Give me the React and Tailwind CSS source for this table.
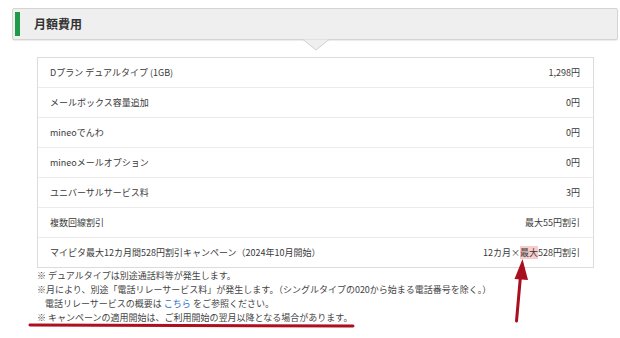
export default function App() {
  const rows = [
    ["Dプラン デュアルタイプ (1GB)", "1,298円"],
    ["メールボックス容量追加", "0円"],
    ["mineoでんわ", "0円"],
    ["mineoメールオプション", "0円"],
    ["ユニバーサルサービス料", "3円"],
    ["複数回線割引", "最大55円割引"],
  ];
  return (
    <div className="relative w-[620px] h-[338px] bg-white overflow-hidden text-[#333] [font-family:'Noto_Sans_CJK_JP','Noto_Sans',sans-serif]">
      <div className="pt-[8px] pl-[12px] pr-[2px]">
        <div className="relative flex items-center h-[32px] bg-[#efefef] border border-[#d4d4d4] rounded-[2px] shadow-[0_1px_1px_rgba(0,0,0,0.08)]">
          <div className="ml-[2px] w-[5px] h-[24px] bg-[#1e9a48]" />
          <div className="ml-[14px] text-[12px] font-bold text-[#333] leading-none">月額費用</div>
          <svg className="absolute left-[290px] top-[30px]" width="26" height="12" viewBox="0 0 26 12">
            <polygon points="0,0.5 13,11 26,0.5" fill="#efefef" />
            <polyline points="0,0.5 13,11 26,0.5" fill="none" stroke="#d0d0d0" strokeWidth="1" />
          </svg>
        </div>
      </div>
      <div className="ml-[37px] mt-[17px] w-[557px] border border-[#dcdcdc]">
        {rows.map(([l, r], i) => (
          <div key={i} className="flex items-center justify-between h-[30px] border-b border-[#ececec] pl-[12px] pr-[13px] text-[9px] text-[#3a3a3a]">
            <span>{l}</span>
            <span>{r}</span>
          </div>
        ))}
        <div className="flex items-center justify-between h-[29px] pl-[12px] pr-[13px] text-[9px] text-[#3a3a3a]">
          <span>マイピタ最大12カ月間528円割引キャンペーン（2024年10月開始）</span>
          <span>
            12カ月×<span className="bg-[#f7cccc]">最大</span>528円割引
          </span>
        </div>
      </div>
      <div className="ml-[37px] mt-[1px] text-[9px] leading-[14px] text-[#444]">
        <div>※ デュアルタイプは別途通話料等が発生します。</div>
        <div>※月により、別途「電話リレーサービス料」が発生します。（シングルタイプの020から始まる電話番号を除く。）</div>
        <div className="pl-[8px]">
          電話リレーサービスの概要は <span className="text-[#2a6ec4]">こちら</span> をご参照ください。
        </div>
        <div>※ キャンペーンの適用開始は、ご利用開始の翌月以降となる場合があります。</div>
      </div>
      <svg className="absolute left-0 top-0 pointer-events-none" width="620" height="338" viewBox="0 0 620 338">
        <line x1="30" y1="325" x2="353" y2="326" stroke="#ad0f1f" strokeWidth="3" strokeLinecap="round" />
        <line x1="516.5" y1="321" x2="520.5" y2="276" stroke="#a8101f" strokeWidth="3" strokeLinecap="round" />
        <polygon points="514.5,279 528,280 522.5,259" fill="#a8101f" />
      </svg>
    </div>
  );
}
